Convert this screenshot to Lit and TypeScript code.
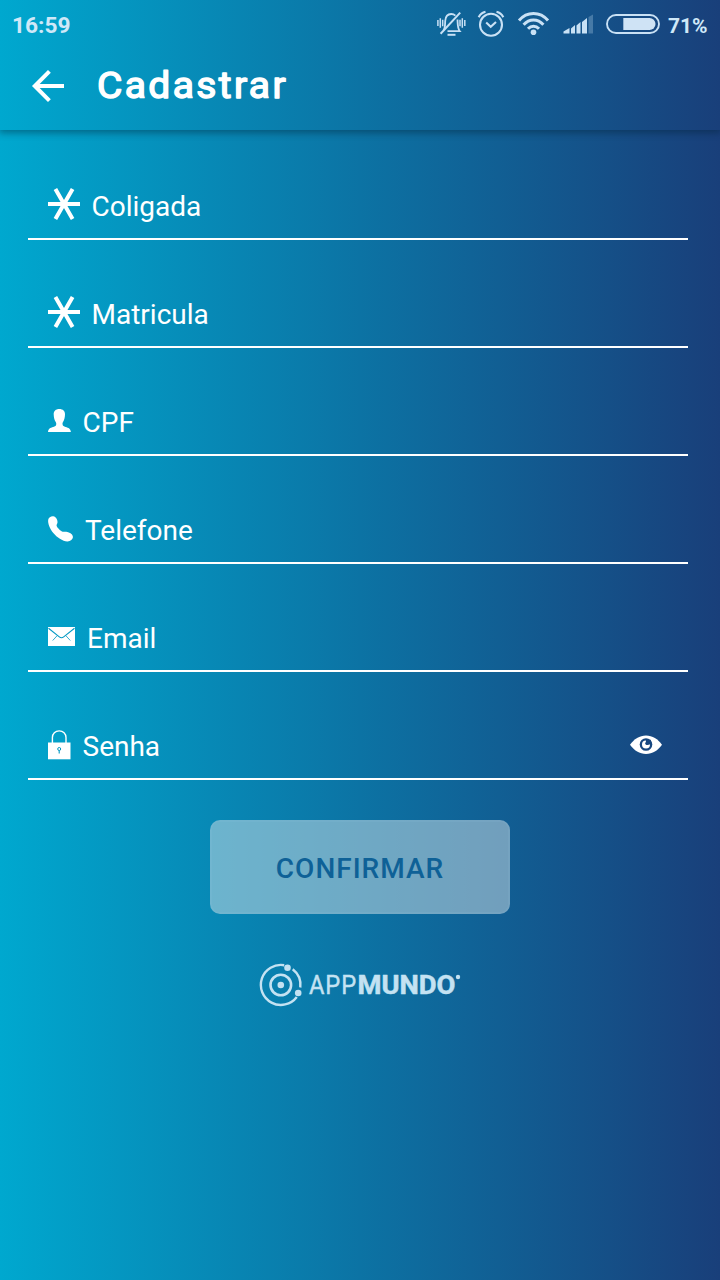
import { LitElement, html, svg, css } from "lit";
import { customElement } from "lit/decorators.js";

const star = html`<svg class="icon" width="32" height="34" viewBox="0 0 32 34">
  <path d="M0 17H32M7.4 2L24.6 32M24.6 2L7.4 32" stroke="#fff" stroke-width="4" fill="none" /></svg>`;

const person = html`<svg class="icon" width="23" height="23" viewBox="0 0 23 23">
  <path fill="#fff" d="M11.3 0C14.9 0 17.2 2.1 17 5.4C16.9 8.4 16.2 11 15 13C14.6 13.7 14.4 14.3 14.6 15.5C14.8 17 15.8 17.4 17.6 18C20.5 18.8 22.6 19.8 22.9 23H0C.2 19.8 2.3 18.8 5.2 18C7.2 17.4 8 17 8.2 15.5C8.4 14.3 8.1 13.7 7.7 13C6.5 11 5.8 8.4 5.7 5.4C5.5 2.1 7.8 0 11.3 0Z" /></svg>`;

const phone = html`<svg class="icon" width="25" height="26" viewBox="0 0 25 26">
  <path fill="#fff" d="M.2 3.8C.6 1.4 3.2 0 5.3.3C7.9.7 9.8 3.9 9.5 6.5C9.3 8 8.4 8.5 8.6 9.7C9 11.6 12.8 15.2 14.8 15.7C16 16 17.3 15.4 19.2 15.9C22 16.5 24.8 18.2 24.9 20.7C25 23.2 22.4 25.3 19.6 25.4C15 25.6 9 21.6 5.3 17.1C2 13.1-.4 7.5.2 3.8Z" /></svg>`;

const mail = html`<svg class="icon" width="27" height="19" viewBox="0 0 27 19">
  <path fill="#fff" d="M0 0H27V19H0Z" />
  <path fill="none" stroke="#0499c4" d="M.5 1.2L11.3 9.9Q13.5 11.6 15.7 9.9L26.5 1.2" stroke-width="1.1" />
  <path fill="none" stroke="#0499c4" d="M9.3 8.5L4.7 13.5M17.7 8.5L22.3 13.5" stroke-width=".8" /></svg>`;

const lock = html`<svg class="icon" width="23" height="30" viewBox="0 0 23 30">
  <path fill="none" stroke="#fff" stroke-width="1.4" d="M4.4 13V7.6C4.4 3.6 7.3.9 11.2.9S18 3.6 18 7.6V13" />
  <path fill="#fff" d="M0 12.5H22.5V29.3H0Z" />
  <circle cx="11.2" cy="19" r="1.5" fill="none" stroke="#0499c4" stroke-width="1" />
  <path stroke="#0499c4" stroke-width="1.1" d="M11.2 20.5V23.6" /></svg>`;

const eye = html`<svg class="eye" width="32" height="20" viewBox="0 0 32 20">
  <path fill="#fff" d="M0 9.8C4 4 9.6.5 16 .5S28 4 32 9.8C28 15.5 22.4 19 16 19S4 15.5 0 9.8Z" />
  <circle cx="16" cy="9.5" r="6.3" fill="#174780" />
  <circle cx="16" cy="9.5" r="4" fill="#fff" />
  <path fill="#174780" d="M16 9.5V4.8H20.8V9.5Z" /><circle cx="17.2" cy="8.2" r="1.9" fill="#174780" /></svg>`;

const fields = [
  { label: "Coligada", icon: star, kind: "star" },
  { label: "Matricula", icon: star, kind: "star" },
  { label: "CPF", icon: person, kind: "person" },
  { label: "Telefone", icon: phone, kind: "phone" },
  { label: "Email", icon: mail, kind: "mail" },
  { label: "Senha", icon: lock, kind: "lock" },
];

const bars = [
  [0.5, 15.5, 6.5, 14],
  [8, 12.5, 12, 11],
  [13.5, 9.5, 17.5, 8],
  [19, 6, 24, 4],
].map(([x1, y1, x2, y2]) => svg`<path fill="#c9e1f5" d=${`M${x1} ${y1 + 2}L${x2} ${y2}V19.5H${x1}Z`} />`);

@customElement("app-root")
export class AppRoot extends LitElement {
  static styles = css`
    :host {
      display: flex;
      flex-direction: column;
      box-sizing: border-box;
      width: 720px;
      height: 1280px;
      overflow: hidden;
      font-family: Roboto, "Liberation Sans", sans-serif;
      color: #fff;
      background: linear-gradient(90deg, #00a8cf 0%, #0c73a4 50%, #193f7a 100%);
    }
    svg { display: block; flex: none; overflow: visible; }
    .header {
      height: 130px;
      flex: none;
      box-shadow: 0 2px 7px 1px rgba(0, 30, 50, 0.42);
      background: linear-gradient(90deg, #00a8cf 0%, #0c73a4 50%, #193f7a 100%);
    }
    .status {
      display: flex;
      align-items: center;
      height: 48px;
      padding: 0 13px 0 12px;
      color: #cfe8f8;
      font-size: 22.7px;
      font-weight: 700;
      line-height: 48px;
    }
    .time { flex: 1; padding-top: 3px; }
    .pct { width: 39px; font-size: 21px; padding-top: 3px; }
    .bell { margin-right: 12px; }
    .alarm { margin-right: 14px; }
    .wifi { margin-right: 14px; }
    .signal { margin-right: 13px; }
    .battery { margin-right: 8px; }
    .toolbar { display: flex; align-items: flex-start; padding: 22px 0 0 32px; }
    .title { margin: -7px 0 0 33px; }
    .form { padding: 2px 32px 0 28px; }
    .field {
      display: flex;
      box-sizing: border-box;
      height: 108px;
      padding: 55px 26px 0 20px;
      border-bottom: 2px solid #fff;
      font-size: 28px;
      line-height: 38px;
    }
    .label { flex: 1; padding-top: 1px; }
    .star .icon { margin: 0 11.5px 0 0; }
    .person .icon { margin: 6px 11.5px 0 0; }
    .phone .icon { margin: 5px 12px 0 0; }
    .mail .icon { margin: 8px 12px 0 0; }
    .lock .icon { margin: 3px 11.5px 0 0; }
    .eye { margin-top: 8px; }
    .confirm {
      display: block;
      box-sizing: border-box;
      width: 300px;
      height: 94px;
      margin: 40px auto 0;
      padding: 2px 0 0;
      border: 2px solid rgba(145, 198, 222, 0.12);
      border-radius: 10px;
      background: rgba(209, 223, 230, 0.5);
      background-clip: border-box;
      color: #0e6197;
      font: 500 28px Roboto, "Liberation Sans", sans-serif;
      letter-spacing: 1px;
    }
    .brand { margin: 50px auto 0; }
  `;

  render() {
    return html`
      <header class="header">
        <div class="status">
          <span class="time">16:59</span>
          <svg class="bell" width="29" height="26" viewBox="0 0 29 26" fill="none" stroke="#c9e1f5" stroke-width="1.8">
            <path d="M6.5 19.5C8.3 17 8 14 8.2 10C8.5 5.5 11 3 14.2 3C15.9 3 17.3 3.6 18.4 4.7M20.5 8.5C20.8 13.5 20.3 17 22.8 20.2H10.5" />
            <path d="M3.6 22.8L23.2 1.6" stroke-width="2" />
            <path d="M10.5 23.8H18.5" stroke-width="2" />
            <path d="M.9 9V15M3.3 7.3V16.7M5.7 8.7V15.3M23 8.7V15.3M25.3 7.3V16.7M27.8 9V15" stroke-width="1.5" />
          </svg>
          <svg class="alarm" width="26" height="26" viewBox="0 0 26 26" fill="none" stroke="#c9e1f5" stroke-width="2.1">
            <circle cx="13" cy="13.7" r="11" />
            <path d="M8.2 11.6L12.7 15.8L18 11" />
            <path d="M.7 6.2Q3 1.8 7.5.8M18.5.8Q23 1.8 25.3 6.2" stroke-width="2.2" />
          </svg>
          <svg class="wifi" width="31" height="24" viewBox="0 0 31 24" fill="none" stroke="#c9e1f5" stroke-width="3">
            <path d="M1 8.5C9-.8 22-.8 30 8.5M5.6 12.8C11.3 6.4 19.7 6.4 25.4 12.8M10 16.8C13.2 13.3 17.8 13.3 21 16.8" />
            <circle cx="15.5" cy="20.2" r="2.8" fill="#c9e1f5" stroke="none" />
          </svg>
          <svg class="signal" width="30" height="20" viewBox="0 0 30 20">
            ${bars}
            <path d="M25.5 3L30 .5V19.5H25.5Z" fill="#c9e1f5" opacity=".28" />
          </svg>
          <svg class="battery" width="54" height="20" viewBox="0 0 54 20">
            <rect x="1" y="1" width="52" height="18" rx="9" fill="none" stroke="#c9e1f5" stroke-width="1.9" />
            <path fill="#cfe3f5" d="M17.3 4H43.5A6 6 0 0 1 43.5 16H17.3Z" />
          </svg>
          <span class="pct">71%</span>
        </div>
        <div class="toolbar">
          <svg width="32" height="32" viewBox="0 0 32 32" fill="none" stroke="#fff" stroke-width="4">
            <path d="M32 16H4M17.4 1.4L2.8 16L17.4 30.6" />
          </svg>
          <svg class="title" width="190" height="44" viewBox="0 0 190 44">
            <text x="0" y="34.5" textLength="191" lengthAdjust="spacingAndGlyphs" font-family="Roboto, sans-serif" font-size="36"
              font-weight="400" letter-spacing="2.2" fill="#fff" stroke="#fff" stroke-width="1.4" stroke-linejoin="round">Cadastrar</text>
          </svg>
        </div>
      </header>
      <main class="form">
        ${fields.map(
          (f) => html`<div class="field ${f.kind}">${f.icon}<span class="label">${f.label}</span>${f.kind === "lock" ? eye : null}</div>`
        )}
      </main>
      <button class="confirm">CONFIRMAR</button>
      <svg class="brand" width="200" height="42" viewBox="0 0 200 42" fill="none" stroke="#c4e2f2">
        <path d="M24.2 1.2A20 20 0 1 0 36.8 33" stroke-width="2.4" />
        <path d="M32.7 5.2A20 20 0 0 1 40.3 23.5" stroke-width="2.4" />
        <circle cx="20.8" cy="21" r="10.3" stroke-width="2.6" />
        <g fill="#c4e2f2" stroke="none">
          <circle cx="20.8" cy="21" r="3.3" />
          <circle cx="27.5" cy="3.8" r="3.3" />
          <circle cx="38.2" cy="29" r="3.3" />
          <text x="49" y="29.5" font-family="Roboto, sans-serif" font-size="26" textLength="48" lengthAdjust="spacingAndGlyphs" letter-spacing="1" stroke="#c4e2f2" stroke-width=".4">APP</text>
          <text x="97.5" y="29.5" font-family="Roboto, sans-serif" font-size="26" font-weight="700" textLength="98" lengthAdjust="spacingAndGlyphs" stroke="#c4e2f2" stroke-width=".5" stroke-linejoin="round">MUNDO</text>
          <circle cx="198" cy="13" r="2.2" />
        </g>
      </svg>
    `;
  }
}
